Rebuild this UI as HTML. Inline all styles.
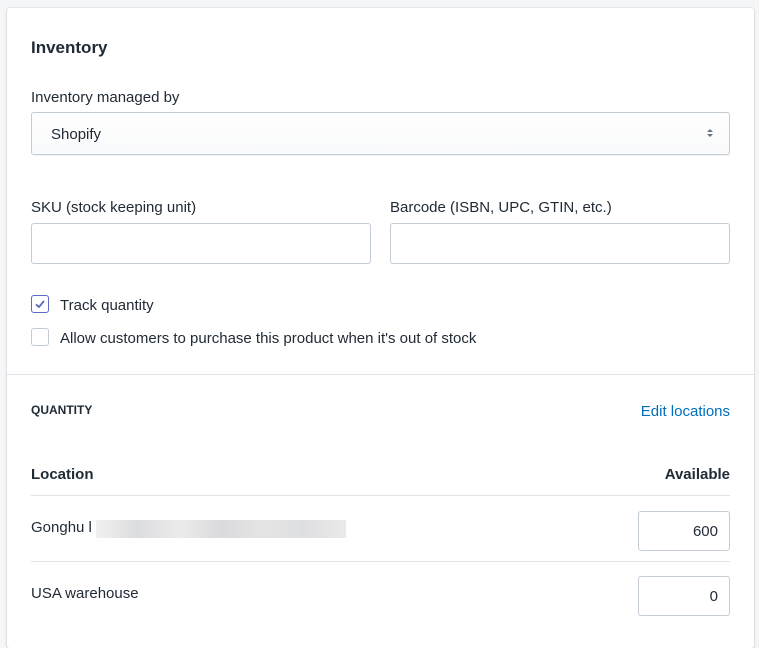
<!DOCTYPE html>
<html><head><style>
*{box-sizing:border-box;margin:0;padding:0}
body{width:759px;height:632px;background:#f4f6f8;font-family:"Liberation Sans",sans-serif;color:#212b36;font-size:15px;overflow:hidden;position:relative}
.card{position:absolute;left:7px;top:8px;width:747px;height:640px;background:#fff;border-radius:3px;box-shadow:0 0 0 1px rgba(63,63,68,.06),0 1px 3px rgba(63,63,68,.15)}
.a{position:absolute;white-space:nowrap}
.r{position:absolute;white-space:nowrap;text-align:right}
.inp{position:absolute;border:1px solid #c4cdd5;border-radius:3px;background:#fff}
.cb{position:absolute;width:18px;height:18px;border:1px solid #c4cdd5;border-radius:3px;background:#fff}
.hr{position:absolute;height:1px;background:#dfe3e8}
</style></head><body>
<div class="card"></div>
<div class="a" style="left:31px;top:38px;font-size:17px;font-weight:bold;color:#212b36">Inventory</div>
<div class="a" style="left:31px;top:89px">Inventory managed by</div>
<div class="inp" style="left:31px;top:112px;width:699px;height:43px;background:linear-gradient(#fff,#f9fafb);box-shadow:0 1px 0 rgba(22,29,37,.05)"></div>
<div class="a" style="left:51px;top:126px">Shopify</div>
<svg class="a" style="left:705px;top:127px" width="10" height="12" viewBox="0 0 10 12"><path d="M2 5 5 2 8 5Z M2 7 5 10 8 7Z" fill="#637381"/></svg>
<div class="a" style="left:31px;top:199px">SKU (stock keeping unit)</div>
<div class="a" style="left:390px;top:199px">Barcode (ISBN, UPC, GTIN, etc.)</div>
<div class="inp" style="left:31px;top:223px;width:340px;height:41px"></div>
<div class="inp" style="left:390px;top:223px;width:340px;height:41px"></div>
<div class="cb" style="left:31px;top:295px;border-color:#5c6ac4"></div>
<svg class="a" style="left:33px;top:297px" width="14" height="14" viewBox="0 0 14 14"><path d="M3 7.5 6 10 11 4" fill="none" stroke="#5c6ac4" stroke-width="1.8"/></svg>
<div class="a" style="left:60px;top:297px">Track quantity</div>
<div class="cb" style="left:31px;top:328px"></div>
<div class="a" style="left:60px;top:330px">Allow customers to purchase this product when it's out of stock</div>
<div class="hr" style="left:7px;top:374px;width:747px"></div>
<div class="a" style="left:31px;top:403px;font-size:12px;font-weight:bold">QUANTITY</div>
<div class="r" style="right:29px;top:403px;color:#006fbb">Edit locations</div>
<div class="a" style="left:31px;top:466px;font-weight:bold">Location</div>
<div class="r" style="right:29px;top:466px;font-weight:bold">Available</div>
<div class="hr" style="left:31px;top:495px;width:699px"></div>
<div class="a" style="left:31px;top:519px">Gonghu l</div>
<div class="a" style="left:96px;top:520px;width:250px;height:18px;background:linear-gradient(90deg,#eee,#d5d6d8,#e8e8e8,#d3d4d6,#e0e0e0,#d8d9db,#e6e6e6);opacity:.85"></div>
<div class="inp" style="left:638px;top:511px;width:92px;height:40px"></div>
<div class="r" style="right:41px;top:523px">600</div>
<div class="hr" style="left:31px;top:561px;width:699px"></div>
<div class="a" style="left:31px;top:585px">USA warehouse</div>
<div class="inp" style="left:638px;top:576px;width:92px;height:40px"></div>
<div class="r" style="right:41px;top:588px">0</div>
</body></html>
